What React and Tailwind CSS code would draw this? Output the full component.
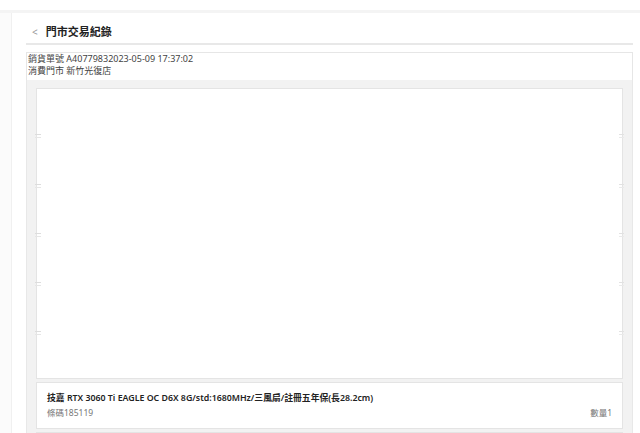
export default function App() {
  const ticks = [133, 183, 232, 281, 330];
  return (
    <div className="w-[640px] h-[433px] overflow-hidden bg-white text-[#333]" style={{ fontFamily: '"Noto Sans", "Noto Sans CJK TC", sans-serif' }}>
      <div className="h-[10px] bg-white" />
      <div className="h-[3px] bg-[#f4f4f4]" />
      <div className="flex h-[420px]">
        <div className="w-[12px] bg-[#fbfbfb] border-r border-[#f0f0f0]" />
        <div className="flex-1 bg-white pl-[14px] pr-[7px]">
          <div className="flex items-center h-[32px] pt-[9px] border-b-2 border-[#e8e8e8]">
            <span className="ml-[6px] text-[10px] text-[#999]">&lt;</span>
            <span className="ml-[8px] text-[11px] font-semibold text-[#222]">門市交易紀錄</span>
          </div>
          <div className="mt-[7px] border border-[#e6e6e6] border-b-0 px-[1px] pb-[3px] text-[9px] leading-[12px] text-[#444]">
            <div>銷貨單號 A40779832023-05-09 17:37:02</div>
            <div>消費門市 新竹光復店</div>
          </div>
          <div className="bg-[#f2f2f2] border-x border-[#e8e8e8] px-[9px] pt-[8px] h-[400px]">
            <div className="relative h-[291px] bg-white border border-[#e4e4e4]">
              {ticks.map((t) => (
                <div key={t} className="absolute -left-[2px] w-[6px] flex flex-col gap-[2px]" style={{ top: t - 88 }}>
                  <div className="h-px bg-[#ddd]" />
                  <div className="h-px bg-[#e6e6e6]" />
                </div>
              ))}
              {ticks.map((t) => (
                <div key={"r" + t} className="absolute -right-[2px] w-[5px] flex flex-col gap-[2px]" style={{ top: t - 88 }}>
                  <div className="h-px bg-[#e2e2e2]" />
                  <div className="h-px bg-[#eaeaea]" />
                </div>
              ))}
            </div>
            <div className="mt-[3px] bg-white border border-[#e4e4e4] px-[10px] pt-[9px] pb-[9px]">
              <div className="text-[8.8px] font-semibold leading-[12px] text-[#222]">技嘉 RTX 3060 Ti EAGLE OC D6X 8G/std:1680MHz/三風扇/註冊五年保(長28.2cm)</div>
              <div className="mt-[3px] flex justify-between text-[8.5px] leading-[12px] text-[#777]">
                <span>條碼185119</span>
                <span>數量1</span>
              </div>
            </div>
            <div className="mt-[3px] h-[20px] bg-white border border-[#e4e4e4]" />
          </div>
        </div>
      </div>
    </div>
  );
}
